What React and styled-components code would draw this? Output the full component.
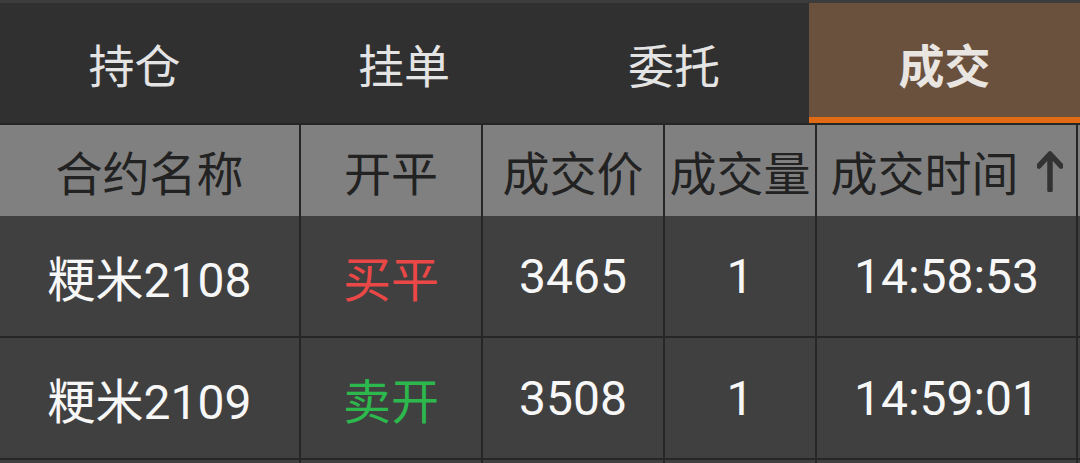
import React from "react";
import styled, { createGlobalStyle } from "styled-components";

const GlobalStyle = createGlobalStyle`
  html, body {
    margin: 0;
    padding: 0;
    background: #2a2a2a;
  }
  body {
    font-family: Roboto, "Noto Sans CJK SC", sans-serif;
  }
`;

const Page = styled.div`
  width: 1080px;
  height: 463px;
  overflow: hidden;
  background: #2a2a2a;
  border-top: 3px solid #3c3c3c;
  box-sizing: border-box;
`;

// tab strip on top
const TabBar = styled.div`
  display: grid;
  grid-template-columns: 269px 270px 270px 1fr;
  height: 120px;
  background: #303030;
  border-bottom: 2px solid #262626;
`;

const Tab = styled.div`
  display: flex;
  align-items: center;
  justify-content: center;
  font-size: 46px;
  color: ${({ active }) => (active ? "#e9e5e1" : "#e4e4e4")};
  font-weight: ${({ active }) => (active ? 700 : 400)};
  background: ${({ active }) => (active ? "#6a513e" : "transparent")};
  box-shadow: ${({ active }) => (active ? "inset 0 -6px 0 #e06b14" : "none")};
`;

const Row = styled.div`
  display: grid;
  grid-template-columns: 299px 180px 180px 150px 259px 1fr;
  column-gap: 2px;
  background: #262626;
  height: ${({ header }) => (header ? "91px" : "120px")};
  border-bottom: ${({ header }) => (header ? "none" : "2px solid #262626")};
`;

const Cell = styled.div`
  display: flex;
  align-items: center;
  justify-content: center;
  gap: 18px;
  background: ${({ header }) => (header ? "#808080" : "#404040")};
  color: ${({ header, tone }) =>
    header ? "#222" : tone === "red" ? "#ea4747" : tone === "green" ? "#2cb84c" : "#f7f7f7"};
  font-size: ${({ header }) => (header ? "47px" : "48px")};
  white-space: nowrap;
  overflow: hidden;
`;

const SortArrow = () => (
  <svg width="26" height="42" viewBox="0 0 26 42">
    <path
      d="M13 40 V5 M2 16 L13 4 L24 16"
      fill="none"
      stroke="#333"
      strokeWidth="5.5"
      strokeLinecap="round"
      strokeLinejoin="round"
    />
  </svg>
);

const tabs = ["持仓", "挂单", "委托", "成交"];

const trades = [
  { name: "粳米2108", side: "买平", tone: "red", price: "3465", qty: "1", time: "14:58:53" },
  { name: "粳米2109", side: "卖开", tone: "green", price: "3508", qty: "1", time: "14:59:01" },
];

export default function App() {
  return (
    <>
      <GlobalStyle />
      <Page>
        <TabBar>
          {tabs.map((t, i) => (
            <Tab key={t} active={i === 3}>
              {t}
            </Tab>
          ))}
        </TabBar>
        <Row header>
          <Cell header>合约名称</Cell>
          <Cell header>开平</Cell>
          <Cell header>成交价</Cell>
          <Cell header>成交量</Cell>
          <Cell header>
            成交时间
            <SortArrow />
          </Cell>
          <Cell header />
        </Row>
        {trades.map((r) => (
          <Row key={r.name}>
            <Cell>{r.name}</Cell>
            <Cell tone={r.tone}>{r.side}</Cell>
            <Cell>{r.price}</Cell>
            <Cell>{r.qty}</Cell>
            <Cell>{r.time}</Cell>
            <Cell />
          </Row>
        ))}
        <Row>
          <Cell />
          <Cell />
          <Cell />
          <Cell />
          <Cell />
          <Cell />
        </Row>
      </Page>
    </>
  );
}
